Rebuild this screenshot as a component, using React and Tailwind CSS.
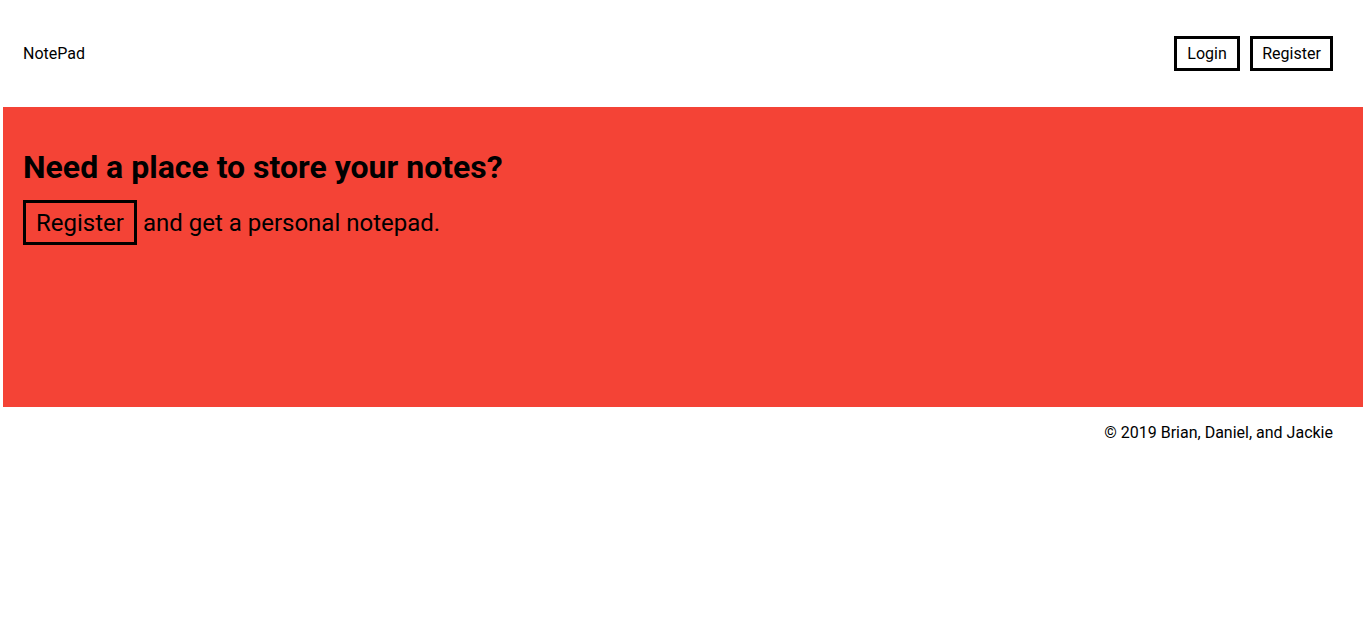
export default function App() {
  return (
    <div className="mx-[3px] font-['Roboto',sans-serif] text-black">
      <header className="flex h-[107px] items-center justify-between pl-5 pr-[30px]">
        <div className="text-[16px] leading-[19px]">NotePad</div>
        <div className="flex gap-[10px]">
          <button className="w-[66px] border-[3px] border-black py-[5px] text-center text-[16px] leading-[19px]">Login</button>
          <button className="w-[83px] border-[3px] border-black py-[5px] text-center text-[16px] leading-[19px]">Register</button>
        </div>
      </header>
      <section className="h-[300px] bg-[#f44336] pl-5 pt-[42px]">
        <h1 className="text-[32px] font-bold leading-[37px]">Need a place to store your notes?</h1>
        <p className="mt-[14px] text-[24px] leading-[28px]">
          <button className="border-[3px] border-black px-[10px] pb-[5px] pt-[6px]">Register</button>{" "}
          and get a personal notepad.
        </p>
      </section>
      <footer className="pr-[30px] pt-[16px] text-right text-[16px] leading-[19px]">
        © 2019 Brian, Daniel, and Jackie
      </footer>
    </div>
  );
}
